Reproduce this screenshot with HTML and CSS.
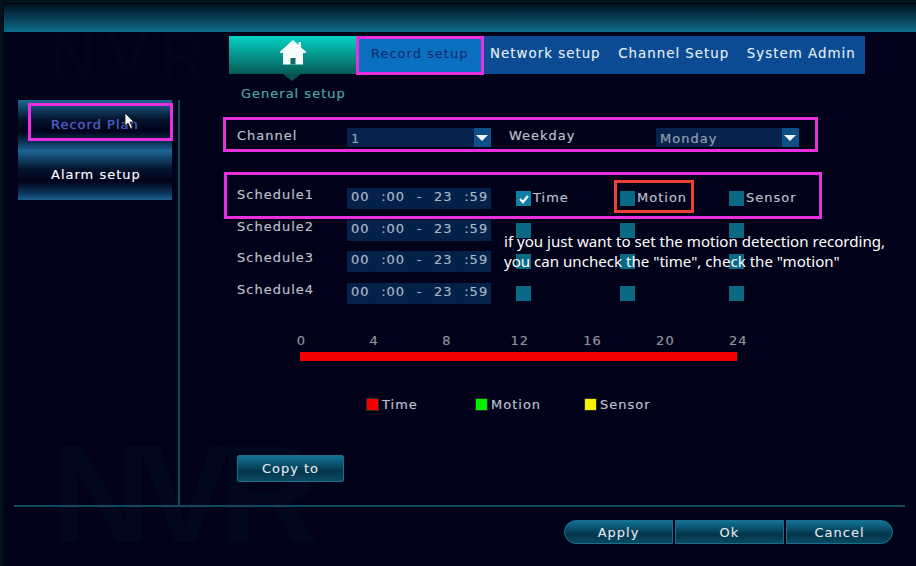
FILE: index.html
```html
<!DOCTYPE html>
<html lang="en">
<head>
    <meta charset="UTF-8">
    <title>Record setup</title>
    <link rel="stylesheet" href="styles.css">
</head>
<body>
    <div class="screen">
        <div class="ghost ghost-top">NVR</div>
        <div class="ghost ghost-bottom">NVR</div>

        <div class="topbar"></div>

        <div class="middle">
            <div class="side">
                <div class="side-item side-active">Record Plan</div>
                <div class="side-item">Alarm setup</div>
            </div>
            <div class="divider"></div>

            <div class="main">
                <div class="tabs">
                    <div class="tab-home">
                        <svg width="28" height="25" viewBox="0 0 28 25">
                            <path d="M14 0 L19.500 5 V2 H22 V7.500 L27.500 12 L26 13 H24 V24.500 H4 V13 H2 L0.500 12 Z" fill="#f4fbfa"/>
                            <rect x="11.500" y="18" width="5" height="6.500" fill="#0b6f69"/>
                        </svg>
                    </div>
                    <div class="tab tab-active">Record setup</div>
                    <div class="tab">Network setup</div>
                    <div class="tab">Channel Setup</div>
                    <div class="tab">System Admin</div>
                </div>
                <div class="subtitle">General setup</div>

                <div class="channel-row">
                    <div class="label">Channel</div>
                    <div class="select">1<span class="select-arrow"></span></div>
                    <div class="label label-weekday">Weekday</div>
                    <div class="select select-day">Monday<span class="select-arrow"></span></div>
                </div>

                <div class="schedules">
                    <div class="schedule">
                        <div class="label">Schedule1</div>
                        <div class="time">00 :00 - 23 :59</div>
                        <div class="check check-time"><span class="box box-on">
                            <svg width="10" height="10" viewBox="0 0 10 10"><path d="M1 5 L4 8 L9 2" fill="none" stroke="#fff" stroke-width="2.200"/></svg>
                        </span>Time</div>
                        <div class="check check-motion"><span class="box"></span>Motion</div>
                        <div class="check"><span class="box"></span>Sensor</div>
                    </div>
                    <div class="schedule">
                        <div class="label">Schedule2</div>
                        <div class="time">00 :00 - 23 :59</div>
                        <div class="check check-time"><span class="box"></span></div>
                        <div class="check check-motion"><span class="box"></span></div>
                        <div class="check"><span class="box"></span></div>
                    </div>
                    <div class="schedule">
                        <div class="label">Schedule3</div>
                        <div class="time">00 :00 - 23 :59</div>
                        <div class="check check-time"><span class="box"></span></div>
                        <div class="check check-motion"><span class="box"></span></div>
                        <div class="check"><span class="box"></span></div>
                    </div>
                    <div class="schedule">
                        <div class="label">Schedule4</div>
                        <div class="time">00 :00 - 23 :59</div>
                        <div class="check check-time"><span class="box"></span></div>
                        <div class="check check-motion"><span class="box"></span></div>
                        <div class="check"><span class="box"></span></div>
                    </div>
                </div>

                <div class="timeline">
                    <div class="hours">
                        <span>0</span><span>4</span><span>8</span><span>12</span><span>16</span><span>20</span><span>24</span>
                    </div>
                    <div class="bar"></div>
                </div>

                <div class="legend">
                    <div class="legend-item"><span class="swatch swatch-red"></span>Time</div>
                    <div class="legend-item"><span class="swatch swatch-green"></span>Motion</div>
                    <div class="legend-item"><span class="swatch swatch-yellow"></span>Sensor</div>
                </div>

                <div class="btn copy-btn">Copy to</div>
            </div>
        </div>

        <div class="footer">
            <div class="btn foot-btn foot-first">Apply</div>
            <div class="btn foot-btn">Ok</div>
            <div class="btn foot-btn foot-last">Cancel</div>
        </div>

        <!-- annotation layer drawn over the screenshot -->
        <div class="mark mark-side"></div>
        <div class="mark mark-tab"></div>
        <div class="mark mark-channel"></div>
        <div class="mark mark-schedule"></div>
        <div class="mark mark-motion"></div>
        <div class="note">if you just want to set the motion detection recording,<br>you can uncheck the "time", check the "motion"</div>
        <svg class="cursor" width="12" height="18" viewBox="0 0 12 18">
            <path d="M1 1 V14 L4 11 L6.500 16.500 L8.500 15.500 L6 10 H10 Z" fill="#fff" stroke="#111" stroke-width="0.800"/>
        </svg>
    </div>
</body>
</html>
```

FILE: styles.css
```css
* {
    box-sizing: border-box;
}

body {
    margin: 0;
    background: #010119;
}

.screen {
    position: relative;
    width: 916px;
    height: 566px;
    overflow: hidden;
    background: #010119;
    box-shadow: inset 3px 0 0 #03131a, inset 0 3px 0 #03131a;
    font-family: "DejaVu Sans", sans-serif;
    font-size: 13px;
    letter-spacing: 1px;
    color: #b9c0c9;
    text-shadow: 0 0 1px rgba(200, 210, 220, 0.35);
}

/* faint watermark in the background */
.ghost {
    position: absolute;
    left: 50px;
    font-family: "Liberation Sans", sans-serif;
    font-weight: bold;
    line-height: 1;
    text-shadow: none;
}

.ghost-top {
    top: 24px;
    font-size: 64px;
    letter-spacing: 10px;
    color: #01041b;
}

.ghost-bottom {
    top: 424px;
    font-size: 140px;
    letter-spacing: -13px;
    color: #01071e;
}

.topbar {
    position: relative;
    height: 28px;
    margin: 4px 0 0 4px;
    background: linear-gradient(to bottom, #01121f, #063a50 45%, #0c6d88);
}

.middle {
    position: relative;
    display: flex;
    height: 473px;
}

/* left menu */
.side {
    width: 154px;
    margin: 68px 0 0 18px;
}

.side-item {
    height: 50px;
    padding: 17px 0 0 33px;
    color: #fff;
    background: linear-gradient(to bottom, #1c6a96, #04142e 38%, #01021a 62%, #0b3358 85%, #1c5f8c);
}

.side-active {
    color: #4a5bd0;
}

.divider {
    width: 2px;
    margin: 68px 0 0 6px;
    background: #12485c;
}

.main {
    margin-left: 49px;
}

/* tabs */
.tabs {
    display: flex;
    width: 636px;
    height: 38px;
    margin-top: 4px;
    background: #0a4b94;
    color: #e4edf5;
}

.tab-home {
    position: relative;
    display: flex;
    flex-shrink: 0;
    justify-content: center;
    padding-top: 4px;
    width: 127px;
    background: linear-gradient(to bottom, #05d3c6, #055a55);
}

.tab-home::after {
    content: "";
    position: absolute;
    top: 38px;
    left: 54px;
    border-left: 9px solid transparent;
    border-right: 9px solid transparent;
    border-top: 7px solid #05524e;
}

.tab {
    display: flex;
    flex-shrink: 0;
    align-items: center;
    padding: 0 8.500px 3px 9px;
    font-size: 13.400px;
    white-space: nowrap;
}

.tab-active {
    width: 125px;
    padding: 0 0 3px 15px;
    font-size: 13px;
    background: #0a70bf;
    color: #0b2a6a;
    text-shadow: none;
}

.subtitle {
    margin: 12px 0 0 12px;
    color: #3fa79f;
}

/* channel row */
.channel-row {
    display: flex;
    align-items: flex-start;
    margin: 27px 0 0 8px;
}

.label {
    width: 110px;
    flex-shrink: 0;
}

.label-weekday {
    width: 147px;
    margin-left: 18px;
}

.select {
    position: relative;
    width: 144px;
    height: 19px;
    padding: 3px 0 0 4px;
    background: #06224d;
    color: #8f9cab;
}

.select-day {
    width: 143px;
}

.select-arrow {
    position: absolute;
    top: 0;
    right: 0;
    width: 17px;
    height: 19px;
    background: #0f4f88;
}

.select-arrow::after {
    content: "";
    position: absolute;
    top: 7px;
    left: 2px;
    border-left: 6px solid transparent;
    border-right: 6px solid transparent;
    border-top: 6px solid #f2f6fa;
}

/* schedules */
.schedules {
    display: flex;
    flex-direction: column;
    gap: 10.500px;
    margin: 41px 0 0 8px;
}

.schedule {
    display: flex;
    height: 21px;
}

.schedule .label {
    margin-top: -1px;
}

.time {
    width: 144px;
    flex-shrink: 0;
    padding: 1px 0 0 4px;
    background: #04214a;
    color: #a9b6c4;
    white-space: pre;
    word-spacing: 6.500px;
}

.check {
    display: flex;
    gap: 2px;
    padding-top: 2px;
}

.check-time {
    width: 104px;
    margin-left: 25px;
}

.check-motion {
    width: 109px;
}

.box {
    display: flex;
    justify-content: center;
    align-items: center;
    width: 15px;
    height: 15px;
    margin-top: 1px;
    background: #0a6a86;
}

.box-on {
    background: #0f7fa8;
}

/* timeline */
.timeline {
    margin: 29px 0 0 36px;
}

.hours {
    display: flex;
    color: #8a909a;
}

.hours span {
    width: 72.800px;
    text-align: center;
}

.bar {
    width: 437px;
    height: 9px;
    margin: 4px 0 0 35px;
    background: #f50000;
}

.legend {
    display: flex;
    margin: 36px 0 0 137px;
}

.legend-item {
    display: flex;
    align-items: center;
    gap: 3px;
    width: 109px;
}

.swatch {
    width: 13px;
    height: 13px;
    border: 1px solid #2a2a2a;
}

.swatch-red {
    background: #f50000;
}

.swatch-green {
    background: #00ee00;
}

.swatch-yellow {
    background: #f7f000;
}

/* buttons */
.btn {
    display: flex;
    justify-content: center;
    align-items: center;
    color: #dfe8ee;
    background: linear-gradient(to bottom, #137395, #04354c 60%, #0a4a63);
    border: 1px solid #1c6f8a;
}

.copy-btn {
    width: 107px;
    height: 27px;
    margin: 43px 0 0 8px;
    border-radius: 2px;
}

.footer {
    position: relative;
    display: flex;
    justify-content: flex-end;
    gap: 2px;
    height: 61px;
    margin: 0 11px 0 14px;
    padding: 13px 12px 0 0;
    border-top: 2px solid #12485c;
}

.foot-btn {
    width: 109px;
    height: 24px;
}

.foot-first {
    border-radius: 12px 0 0 12px;
}

.foot-last {
    width: 107px;
    border-radius: 0 12px 12px 0;
}

/* annotations */
.mark {
    position: absolute;
    border: 3px solid #e92fe0;
}

.mark-side {
    left: 28px;
    top: 103px;
    width: 145px;
    height: 38px;
}

.mark-tab {
    left: 356px;
    top: 36px;
    width: 128px;
    height: 39px;
}

.mark-channel {
    left: 223px;
    top: 117px;
    width: 595px;
    height: 35px;
}

.mark-schedule {
    left: 224px;
    top: 172px;
    width: 598px;
    height: 47px;
}

.mark-motion {
    left: 614px;
    top: 180px;
    width: 80px;
    height: 33px;
    border-color: #ee4035;
}

.note {
    position: absolute;
    left: 504px;
    top: 231px;
    font-family: "Noto Sans", sans-serif;
    font-size: 15.100px;
    letter-spacing: 0;
    line-height: 20px;
    color: #fff;
    text-shadow: none;
    white-space: nowrap;
}

.cursor {
    position: absolute;
    left: 124px;
    top: 112px;
}
```
